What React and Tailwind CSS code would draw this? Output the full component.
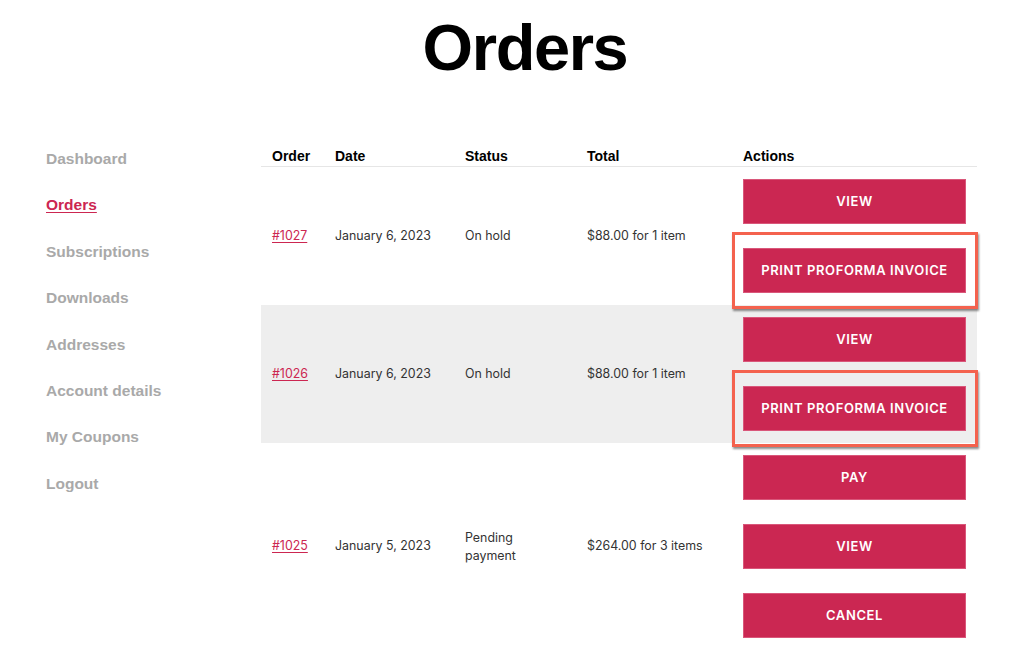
import React from "react";

const nav = ["Dashboard", "Orders", "Subscriptions", "Downloads", "Addresses", "Account details", "My Coupons", "Logout"];

const orders = [
  { id: "#1027", date: "January 6, 2023", status: ["On hold"], total: "$88.00 for 1 item", actions: ["VIEW", "PRINT PROFORMA INVOICE"], grey: false },
  { id: "#1026", date: "January 6, 2023", status: ["On hold"], total: "$88.00 for 1 item", actions: ["VIEW", "PRINT PROFORMA INVOICE"], grey: true },
  { id: "#1025", date: "January 5, 2023", status: ["Pending", "payment"], total: "$264.00 for 3 items", actions: ["PAY", "VIEW", "CANCEL"], grey: false },
];

function Btn({ label }) {
  const highlight = label === "PRINT PROFORMA INVOICE";
  return (
    <div className="relative w-[223px]">
      {highlight && (
        <div className="absolute top-[-16px] bottom-[-16px] left-[-11px] right-[-12px] border-[3px] border-[#f4624e] shadow-[1px_2px_2px_rgba(0,0,0,0.45)] pointer-events-none" />
      )}
      <div className="relative h-[45px] w-[223px] bg-[#cb2752] border border-[#d9577a] flex items-center justify-center text-white text-[13px] font-semibold tracking-[0.6px]" style={{ fontFamily: "Inter, 'Noto Sans', sans-serif" }}>
        {label}
      </div>
    </div>
  );
}

export default function App() {
  return (
    <div className="w-[1024px] h-[648px] overflow-hidden bg-white" style={{ fontFamily: "Inter, 'Liberation Sans', sans-serif" }}>
      <div className="pt-[15px] pl-[26px] flex justify-center">
        <h1 className="text-[65px] leading-none font-bold tracking-[-1.4px] text-black" style={{ fontFamily: "'Liberation Sans', Arial, sans-serif" }}>Orders</h1>
      </div>
      <div className="flex pl-[46px] pt-[66px]">
        <nav className="w-[215px] flex flex-col pt-[2px]">
          {nav.map((n) => (
            <a
              key={n}
              className={
                "h-[46.4px] leading-[22px] text-[15.5px] font-bold " +
                (n === "Orders" ? "text-[#cc2651] underline underline-offset-2" : "text-[#a9a9a9]")
              }
              style={{ fontFamily: "'Liberation Sans', Arial, sans-serif" }}
            >
              {n}
            </a>
          ))}
        </nav>
        <table className="w-[716px] table-fixed border-collapse">
          <colgroup>
            <col className="w-[63px]" />
            <col className="w-[130px]" />
            <col className="w-[122px]" />
            <col className="w-[156px]" />
            <col className="w-[245px]" />
          </colgroup>
          <thead>
            <tr className="border-b border-[#e6e6e6]">
              {["Order", "Date", "Status", "Total", "Actions"].map((h) => (
                <th key={h} className="text-left pl-[11px] pt-[1px] h-[20px] text-[14px] font-bold text-black leading-[19px]" style={{ fontFamily: "'Liberation Sans', Arial, sans-serif" }}>
                  {h}
                </th>
              ))}
            </tr>
          </thead>
          <tbody>
            {orders.map((o) => (
              <tr key={o.id} className={o.grey ? "bg-[#eeeeee]" : ""}>
                <td className="pl-[11px] align-middle text-[12.4px] text-[#cc2651] underline underline-offset-2">{o.id}</td>
                <td className="pl-[11px] align-middle text-[12.4px] text-[#333333]">{o.date}</td>
                <td className="pl-[11px] align-middle text-[12.4px] text-[#333333] leading-[18px]">
                  {o.status.map((s) => (
                    <div key={s}>{s}</div>
                  ))}
                </td>
                <td className="pl-[11px] align-middle text-[12.4px] text-[#333333]">{o.total}</td>
                <td className="pl-[11px] py-[12px] align-middle">
                  <div className="flex flex-col gap-[24px]">
                    {o.actions.map((a) => (
                      <Btn key={a} label={a} />
                    ))}
                  </div>
                </td>
              </tr>
            ))}
          </tbody>
        </table>
      </div>
    </div>
  );
}
